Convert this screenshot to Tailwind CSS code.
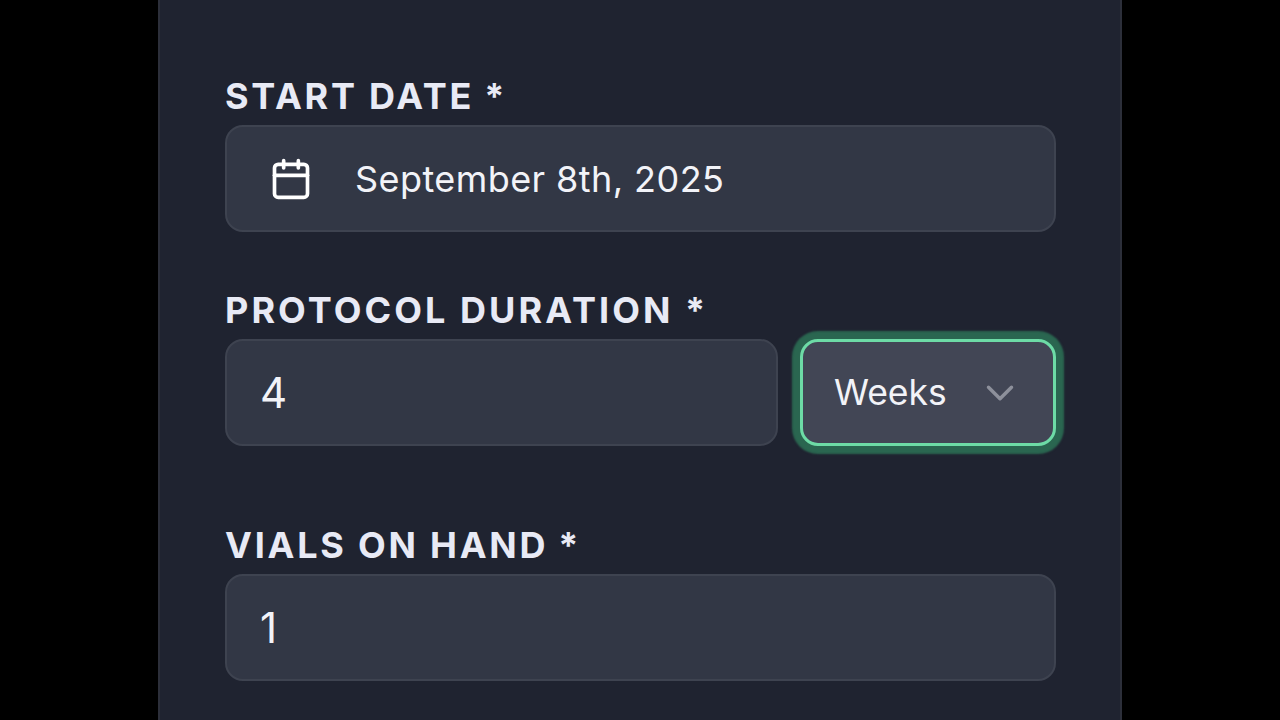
<!DOCTYPE html>
<html lang="en">
  <head>
    <meta charset="UTF-8" />
    <title>Protocol form</title>
    <script src="https://cdn.jsdelivr.net/npm/@tailwindcss/browser@4"></script>
  </head>
  <body class="bg-black h-[720px] overflow-hidden font-['Inter',sans-serif]">
    <div class="mx-auto w-[964px] h-[720px] bg-[#1f2330] border-x-2 border-[#2c2f3a] pl-[65px] pr-[65px] pt-[74px]">
      <!-- Start date -->
      <label class="flex gap-[10px] h-[51px] text-[36px] leading-[44px] font-bold tracking-[0.077em] text-[#e8eaf5]"><span>START DATE</span><span>*</span></label>
      <div class="flex items-center w-[831px] h-[107px] rounded-[18px] bg-[#323745] border-2 border-[#3e4350] pl-[42px] text-[36px] tracking-[0.012em] text-[#f2f3f8]">
        <svg class="w-[44px] h-[44px] mr-[42px] text-white" viewBox="0 0 24 24" fill="none" stroke="currentColor" stroke-width="2" stroke-linecap="round" stroke-linejoin="round">
          <path d="M8 2v4" />
          <path d="M16 2v4" />
          <rect x="3" y="4" width="18" height="18" rx="2" />
          <path d="M3 10h18" />
        </svg>
        <span>September 8th, 2025</span>
      </div>

      <!-- Duration -->
      <label class="block mt-[56px] h-[51px] text-[36px] leading-[44px] font-bold tracking-[0.085em] text-[#e8eaf5]">PROTOCOL DURATION *</label>
      <div class="flex gap-[22px] w-[831px]">
        <div class="flex-1 flex items-center h-[107px] rounded-[18px] bg-[#323745] border-2 border-[#3e4350] pl-[33px] text-[42px] text-[#f2f3f8]">4</div>
        <div class="w-[256px] flex items-center justify-between h-[107px] rounded-[18px] bg-[#424655] border-[3px] border-[#6ddba6] shadow-[0_0_2px_8px_#2a6650] pl-[31px] pr-[30px] text-[35.5px] text-[#f2f3f8]">
          <span>Weeks</span>
          <svg class="w-[46px] h-[46px] text-[#8d909b]" viewBox="0 0 24 24" fill="none" stroke="currentColor" stroke-width="1.8" stroke-linecap="round" stroke-linejoin="round">
            <path d="m6 9 6 6 6-6" />
          </svg>
        </div>
      </div>

      <!-- Vials -->
      <label class="flex gap-[10px] mt-[77px] h-[51px] text-[36px] leading-[44px] font-bold tracking-[0.077em] text-[#e8eaf5]"><span>VIALS ON HAND</span><span>*</span></label>
      <div class="flex items-center w-[831px] h-[107px] rounded-[18px] bg-[#323745] border-2 border-[#3e4350] pl-[33px] text-[42px] text-[#f2f3f8]">1</div>
    </div>
  </body>
</html>
